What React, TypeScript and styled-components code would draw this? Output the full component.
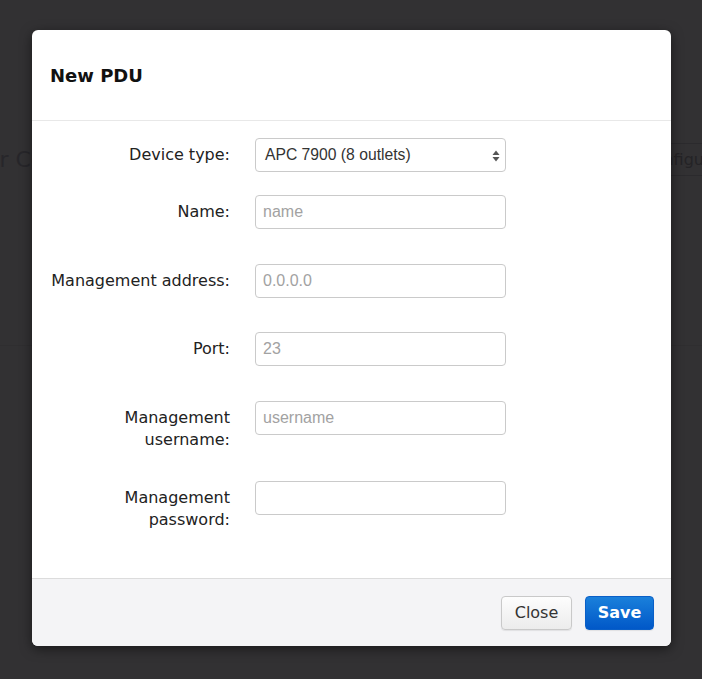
import React from "react";
import styled, { createGlobalStyle } from "styled-components";

const Global = createGlobalStyle`
  html, body { margin: 0; padding: 0; }
  body {
    background: #323133;
    width: 702px;
    height: 679px;
    overflow: hidden;
    font-family: "DejaVu Sans", Verdana, sans-serif;
  }
`;

const Page = styled.div`
  position: relative;
  width: 702px;
  height: 679px;
  overflow: hidden;
  background: #323133;
  padding-top: 143px;
  box-sizing: border-box;
`;

const BackToolbar = styled.div`
  display: flex;
  justify-content: space-between;
  align-items: center;
  height: 33px;
`;

const BackTitle = styled.div`
  margin-left: -58px;
  font-size: 22px;
  color: #27262a;
  white-space: nowrap;
`;

const BackButton = styled.div`
  margin-right: -2px;
  height: 33px;
  box-sizing: border-box;
  border: 1px solid #2b2a2d;
  border-right: none;
  border-radius: 4px 0 0 4px;
  padding: 0 0 0 11px;
  display: flex;
  align-items: center;
  font-size: 16px;
  color: #242326;
  white-space: nowrap;
`;

const BackDivider = styled.div`
  margin-top: 169px;
  border-top: 1px solid #2f2e30;
`;

const Modal = styled.div`
  position: absolute;
  left: 32px;
  top: 30px;
  width: 639px;
  background: #fff;
  border-radius: 6px;
  overflow: hidden;
  box-shadow: 0 3px 12px rgba(0, 0, 0, 0.5);
`;

const Header = styled.div`
  height: 91px;
  box-sizing: border-box;
  padding: 0 18px;
  display: flex;
  align-items: center;
  border-bottom: 1px solid #e8e8e8;
`;

const Title = styled.h3`
  margin: 0;
  font-size: 18px;
  font-weight: bold;
  color: #111;
  font-family: "DejaVu Sans", Verdana, sans-serif;
`;

const Body = styled.div`
  padding: 17px 0 47px;
`;

const Row = styled.div<{ $after: number }>`
  display: grid;
  grid-template-columns: 198px 251px;
  column-gap: 25px;
  align-items: start;
  margin-bottom: ${(p) => p.$after}px;
`;

const Label = styled.label`
  text-align: right;
  font-size: 16px;
  line-height: 22px;
  padding-top: 6px;
  color: #222;
`;

const TextInput = styled.input`
  height: 34px;
  box-sizing: border-box;
  width: 100%;
  border: 1px solid #cacaca;
  border-radius: 4px;
  padding: 0 7px;
  font-family: "Liberation Sans", Arial, sans-serif;
  font-size: 16px;
  color: #333;
  background: #fff;
  outline: none;
  &::placeholder {
    color: #a2a2a2;
  }
`;

const SelectBox = styled.div`
  position: relative;
  height: 34px;
  box-sizing: border-box;
  border: 1px solid #cacaca;
  border-radius: 4px;
  padding: 0 9px;
  display: flex;
  align-items: center;
  font-family: "Liberation Sans", Arial, sans-serif;
  font-size: 15.7px;
  color: #333;
  background: #fff;
`;

const Arrows = styled.svg`
  position: absolute;
  right: 5px;
  top: 11px;
`;

const Footer = styled.div`
  height: 68px;
  box-sizing: border-box;
  border-top: 1px solid #dcdcdc;
  background: #f4f4f6;
  display: flex;
  justify-content: flex-end;
  align-items: center;
  gap: 13px;
  padding: 0 17px;
`;

const Button = styled.button<{ $primary?: boolean }>`
  height: 34px;
  box-sizing: border-box;
  border-radius: 4px;
  font-family: "DejaVu Sans", Verdana, sans-serif;
  font-size: 16px;
  font-weight: ${(p) => (p.$primary ? "bold" : "normal")};
  color: ${(p) => (p.$primary ? "#fff" : "#333")};
  border: 1px solid ${(p) => (p.$primary ? "#0a5fc7" : "#c9c9c9")};
  background: ${(p) =>
    p.$primary
      ? "linear-gradient(#1a80db, #0158c8)"
      : "linear-gradient(#fdfdfd, #ececec)"};
  padding: 0;
  width: ${(p) => (p.$primary ? "69px" : "71px")};
  box-shadow: 0 1px 1px rgba(0, 0, 0, 0.08);
`;

const fields = [
  { label: "Name:", placeholder: "name", after: 35 },
  { label: "Management address:", placeholder: "0.0.0.0", after: 34 },
  { label: "Port:", placeholder: "23", after: 35 },
  { label: ["Management", "username:"], placeholder: "username", after: 30 },
  { label: ["Management", "password:"], placeholder: "", after: 0, type: "password" },
];

export default function App() {
  return (
    <>
      <Global />
      <Page>
        <BackToolbar>
          <BackTitle>Power Co</BackTitle>
          <BackButton>Configu</BackButton>
        </BackToolbar>
        <BackDivider />
        <Modal>
          <Header>
            <Title>New PDU</Title>
          </Header>
          <Body>
            <Row $after={23}>
              <Label>Device type:</Label>
              <SelectBox>
                APC 7900 (8 outlets)
                <Arrows width="8" height="12" viewBox="0 0 8 12">
                  <path d="M4 0.5 L7.5 5 L0.5 5 Z" fill="#555" />
                  <path d="M4 11.5 L7.5 7 L0.5 7 Z" fill="#555" />
                </Arrows>
              </SelectBox>
            </Row>
            {fields.map((f, i) => (
              <Row $after={f.after} key={i}>
                <Label>
                  {Array.isArray(f.label) ? (
                    <>
                      {f.label[0]}
                      <br />
                      {f.label[1]}
                    </>
                  ) : (
                    f.label
                  )}
                </Label>
                <TextInput type={f.type || "text"} placeholder={f.placeholder} />
              </Row>
            ))}
          </Body>
          <Footer>
            <Button>Close</Button>
            <Button $primary>Save</Button>
          </Footer>
        </Modal>
      </Page>
    </>
  );
}
